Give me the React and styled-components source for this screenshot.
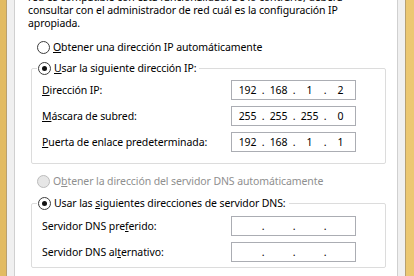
import React from 'react';
import styled, { createGlobalStyle } from 'styled-components';

const GlobalStyle = createGlobalStyle`
	html, body {
		margin: 0;
		padding: 0;
		overflow: hidden;
	}
	body {
		font-family: "Noto Sans", "Open Sans", sans-serif;
		font-size: 10.5px;
		letter-spacing: -0.1px;
		color: #000;
	}
`;

const Frame = styled.div`
	display: flex;
	width: 414px;
	height: 276px;
	box-sizing: border-box;
	padding: 0 8px 0 6px;
	background: linear-gradient(90deg, #e2bb62, #ecc872);
	overflow: hidden;
`;

const WindowBody = styled.div`
	flex: 1;
	display: flex;
	background: #f0f0f0;
	border-left: 1px solid #b8a070;
	border-right: 1px solid #b8a070;
	padding: 0 7px;
`;

const Page = styled.div`
	flex: 1;
	background: #fff;
	border-left: 1px solid #d0d0d0;
	border-right: 1px solid #d0d0d0;
	padding: 0 11px 0 13px;
	display: flex;
	flex-direction: column;
`;

const Intro = styled.p`
	margin: -9px 0 0;
	line-height: 13px;
	white-space: nowrap;
`;

const RadioRow = styled.label`
	display: flex;
	align-items: center;
	gap: 3px;
	height: 14px;
	margin: ${p => p.$margin || '0'};
	color: ${p => (p.$disabled ? '#8f8f8f' : '#000')};
	white-space: nowrap;
`;

const Circle = styled.span`
	box-sizing: border-box;
	width: 13px;
	height: 13px;
	border-radius: 50%;
	border: 1px solid ${p => (p.$disabled ? '#bcbcbc' : '#3c3c3c')};
	background: ${p => (p.$disabled ? '#e6e6e6' : '#fff')};
	display: flex;
	align-items: center;
	justify-content: center;

	&::after {
		content: '';
		width: 5px;
		height: 5px;
		border-radius: 50%;
		background: ${p => (p.$checked ? '#111' : 'transparent')};
	}
`;

const Group = styled.fieldset`
	margin: ${p => p.$margin || '0'};
	margin-left: 3px;
	padding: ${p => p.$top}px 0 0 10px;
	border: 1px solid #dcdcdc;
	border-radius: 2px;
	display: flex;
	flex-direction: column;
	gap: 6px;
	min-width: 0;
	height: ${p => p.$height}px;
	box-sizing: border-box;
`;

const Legend = styled.legend`
	padding: 0 3px 0 1px;
	margin-left: -5px;
	line-height: 14px;
`;

const FieldRow = styled.div`
	display: flex;
	align-items: center;
	justify-content: space-between;
	padding-right: 29px;
	height: 20px;
`;

const IpBox = styled.div`
	box-sizing: border-box;
	width: 125px;
	height: 20px;
	border: 1px solid #abadb3;
	display: flex;
	align-items: center;
	padding-left: 3px;
`;

const Octet = styled.span`
	width: 25px;
	text-align: center;
`;

const Dot = styled.span`
	width: 6px;
	text-align: center;
`;

const U = styled.span`
	text-decoration: underline;
	text-underline-offset: 1px;
`;

function Radio({ checked, disabled, children, margin }) {
	return (
		<RadioRow $disabled={disabled} $margin={margin}>
			<Circle $checked={checked} $disabled={disabled} />
			<span>{children}</span>
		</RadioRow>
	);
}

function IpField({ value }) {
	const parts = value ? value.split('.') : ['', '', '', ''];
	return (
		<IpBox>
			{parts.map((p, i) => (
				<React.Fragment key={i}>
					<Octet>{p}</Octet>
					{i < 3 && <Dot>.</Dot>}
				</React.Fragment>
			))}
		</IpBox>
	);
}

export default function App() {
	return (
		<>
			<GlobalStyle />
			<Frame>
				<WindowBody>
					<Page>
						<Intro>
							red es compatible con esta funcionalidad. De lo contrario, deberá<br />
							consultar con el administrador de red cuál es la configuración IP<br />
							apropiada.
						</Intro>

						<Radio margin="10px 0 0 9px">
							<U>O</U>btener una dirección IP automáticamente
						</Radio>

						<Group $margin="7px 0 0" $height={103} $top={5}>
							<Legend>
								<Radio checked>
									<U>U</U>sar la siguiente dirección IP:
								</Radio>
							</Legend>
							<FieldRow>
								<span><U>D</U>irección IP:</span>
								<IpField value="192.168.1.2" />
							</FieldRow>
							<FieldRow>
								<span><U>M</U>áscara de subred:</span>
								<IpField value="255.255.255.0" />
							</FieldRow>
							<FieldRow>
								<span><U>P</U>uerta de enlace predeterminada:</span>
								<IpField value="192.168.1.1" />
							</FieldRow>
						</Group>

						<Radio disabled margin="10px 0 0 9px">
							O<U>b</U>tener la dirección del servidor DNS automáticamente
						</Radio>

						<Group $margin="8px 0 0" $height={72} $top={6}>
							<Legend>
								<Radio checked>
									Usar las <U>s</U>iguientes direcciones de servidor DNS:
								</Radio>
							</Legend>
							<FieldRow>
								<span>Servidor DNS pre<U>f</U>erido:</span>
								<IpField />
							</FieldRow>
							<FieldRow>
								<span>Servidor DNS al<U>t</U>ernativo:</span>
								<IpField />
							</FieldRow>
						</Group>
					</Page>
				</WindowBody>
			</Frame>
		</>
	);
}
